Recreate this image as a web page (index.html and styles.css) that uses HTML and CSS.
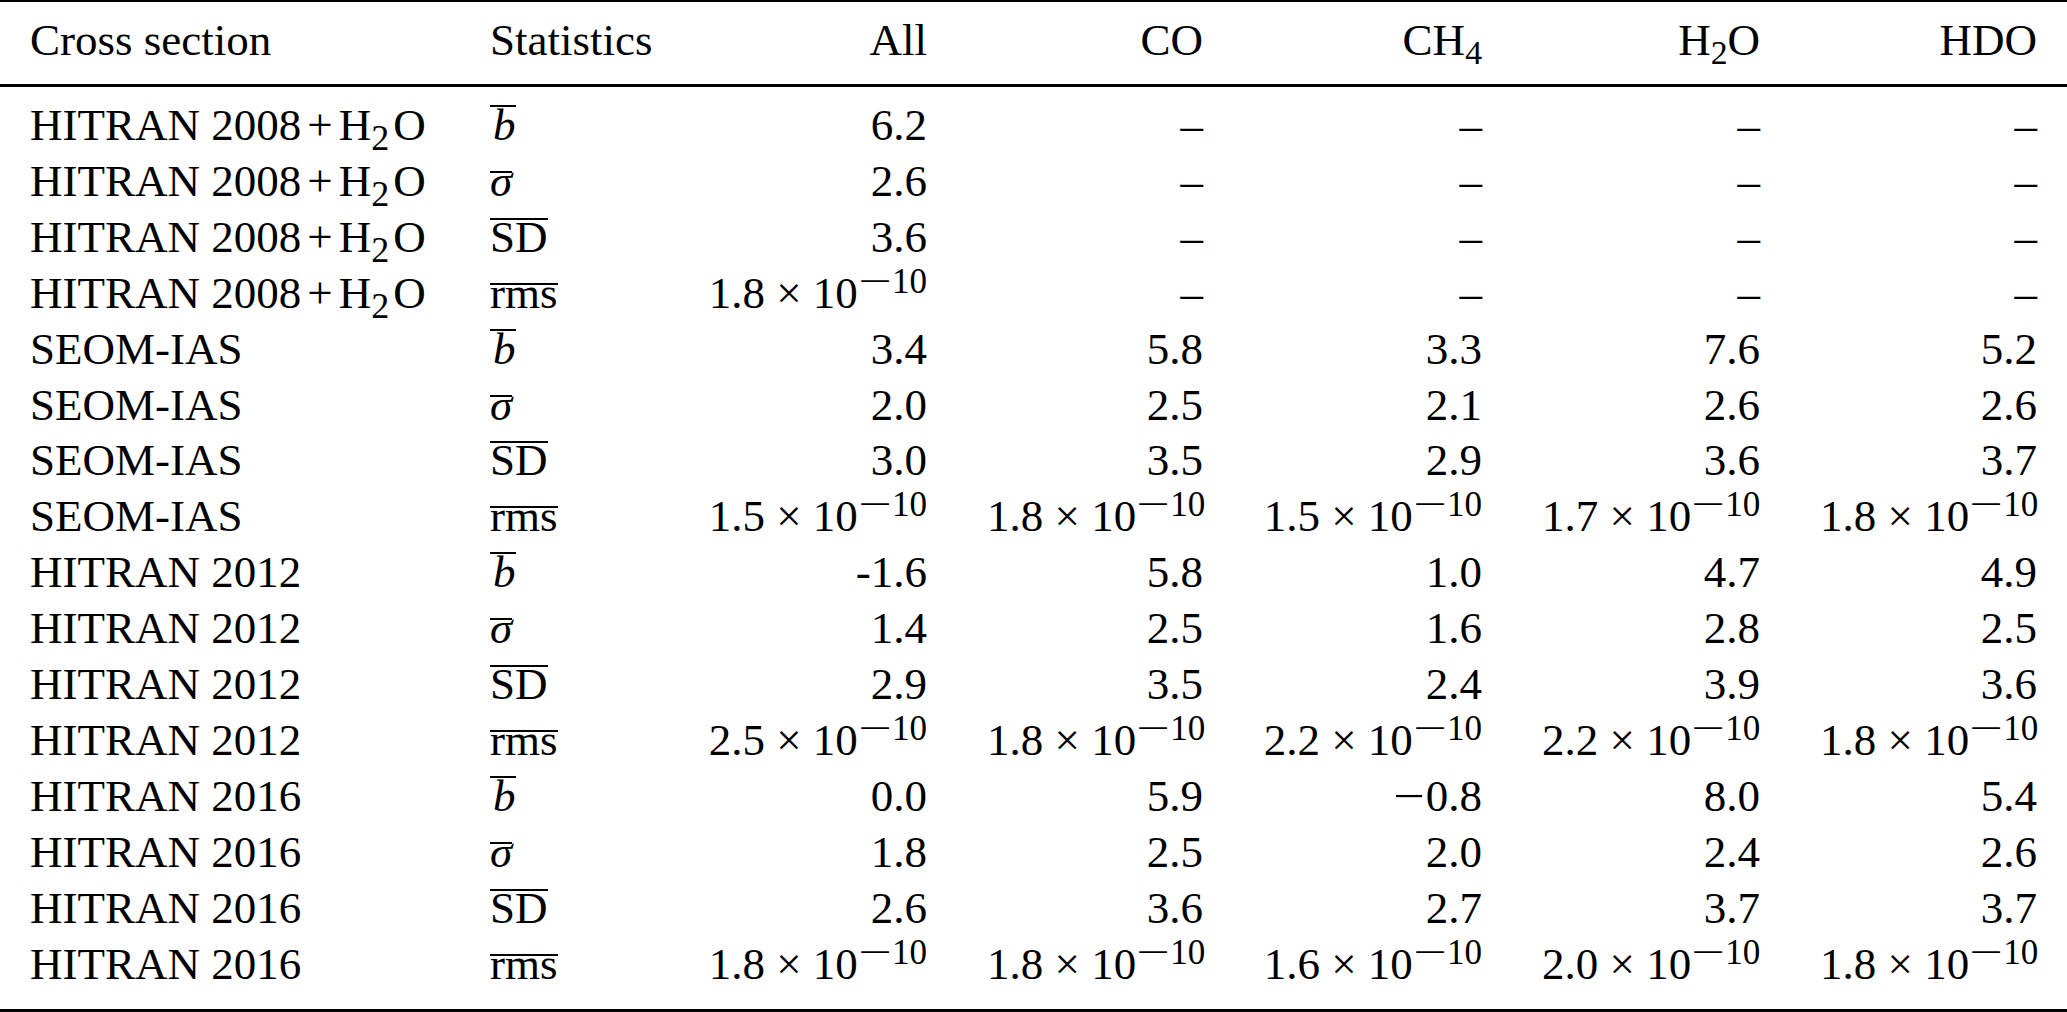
FILE: index.html
```html
<!DOCTYPE html>
<html lang="en">
<head>
<meta charset="utf-8">
<title>Cross section statistics</title>
<link rel="stylesheet" href="styles.css">
</head>
<body>
<table class="stats">
  <colgroup>
    <col class="c-name">
    <col class="c-stat">
    <col class="c-all">
    <col class="c-co">
    <col class="c-ch4">
    <col class="c-h2o">
    <col class="c-hdo">
  </colgroup>
  <thead>
    <tr>
      <th class="l">Cross section</th>
      <th class="l">Statistics</th>
      <th>All</th>
      <th>CO</th>
      <th>CH<span class="sub">4</span></th>
      <th>H<span class="sub">2</span>O</th>
      <th>HDO</th>
    </tr>
  </thead>
  <tbody>
    <tr><td class="l">HITRAN 2008<span class="op">+</span>H<span class="sub sub-m">2</span>O</td><td class="l"><span class="bar bar-asc"><i>b</i></span></td><td>6.2</td><td>–</td><td>–</td><td>–</td><td>–</td></tr>
    <tr><td class="l">HITRAN 2008<span class="op">+</span>H<span class="sub sub-m">2</span>O</td><td class="l"><span class="bar bar-x"><i>σ</i></span></td><td>2.6</td><td>–</td><td>–</td><td>–</td><td>–</td></tr>
    <tr><td class="l">HITRAN 2008<span class="op">+</span>H<span class="sub sub-m">2</span>O</td><td class="l"><span class="bar bar-cap">SD</span></td><td>3.6</td><td>–</td><td>–</td><td>–</td><td>–</td></tr>
    <tr><td class="l">HITRAN 2008<span class="op">+</span>H<span class="sub sub-m">2</span>O</td><td class="l"><span class="bar bar-x">rms</span></td><td>1.8 × 10<span class="sup"><span class="mn">−</span>10</span></td><td>–</td><td>–</td><td>–</td><td>–</td></tr>

    <tr><td class="l">SEOM-IAS</td><td class="l"><span class="bar bar-asc"><i>b</i></span></td><td>3.4</td><td>5.8</td><td>3.3</td><td>7.6</td><td>5.2</td></tr>
    <tr><td class="l">SEOM-IAS</td><td class="l"><span class="bar bar-x"><i>σ</i></span></td><td>2.0</td><td>2.5</td><td>2.1</td><td>2.6</td><td>2.6</td></tr>
    <tr><td class="l">SEOM-IAS</td><td class="l"><span class="bar bar-cap">SD</span></td><td>3.0</td><td>3.5</td><td>2.9</td><td>3.6</td><td>3.7</td></tr>
    <tr><td class="l">SEOM-IAS</td><td class="l"><span class="bar bar-x">rms</span></td><td>1.5 × 10<span class="sup"><span class="mn">−</span>10</span></td><td>1.8 × 10<span class="sup"><span class="mn">−</span>10</span></td><td>1.5 × 10<span class="sup"><span class="mn">−</span>10</span></td><td>1.7 × 10<span class="sup"><span class="mn">−</span>10</span></td><td>1.8 × 10<span class="sup"><span class="mn">−</span>10</span></td></tr>

    <tr><td class="l">HITRAN 2012</td><td class="l"><span class="bar bar-asc"><i>b</i></span></td><td>-1.6</td><td>5.8</td><td>1.0</td><td>4.7</td><td>4.9</td></tr>
    <tr><td class="l">HITRAN 2012</td><td class="l"><span class="bar bar-x"><i>σ</i></span></td><td>1.4</td><td>2.5</td><td>1.6</td><td>2.8</td><td>2.5</td></tr>
    <tr><td class="l">HITRAN 2012</td><td class="l"><span class="bar bar-cap">SD</span></td><td>2.9</td><td>3.5</td><td>2.4</td><td>3.9</td><td>3.6</td></tr>
    <tr><td class="l">HITRAN 2012</td><td class="l"><span class="bar bar-x">rms</span></td><td>2.5 × 10<span class="sup"><span class="mn">−</span>10</span></td><td>1.8 × 10<span class="sup"><span class="mn">−</span>10</span></td><td>2.2 × 10<span class="sup"><span class="mn">−</span>10</span></td><td>2.2 × 10<span class="sup"><span class="mn">−</span>10</span></td><td>1.8 × 10<span class="sup"><span class="mn">−</span>10</span></td></tr>

    <tr><td class="l">HITRAN 2016</td><td class="l"><span class="bar bar-asc"><i>b</i></span></td><td>0.0</td><td>5.9</td><td><span class="mn">−</span>0.8</td><td>8.0</td><td>5.4</td></tr>
    <tr><td class="l">HITRAN 2016</td><td class="l"><span class="bar bar-x"><i>σ</i></span></td><td>1.8</td><td>2.5</td><td>2.0</td><td>2.4</td><td>2.6</td></tr>
    <tr><td class="l">HITRAN 2016</td><td class="l"><span class="bar bar-cap">SD</span></td><td>2.6</td><td>3.6</td><td>2.7</td><td>3.7</td><td>3.7</td></tr>
    <tr><td class="l">HITRAN 2016</td><td class="l"><span class="bar bar-x">rms</span></td><td>1.8 × 10<span class="sup"><span class="mn">−</span>10</span></td><td>1.8 × 10<span class="sup"><span class="mn">−</span>10</span></td><td>1.6 × 10<span class="sup"><span class="mn">−</span>10</span></td><td>2.0 × 10<span class="sup"><span class="mn">−</span>10</span></td><td>1.8 × 10<span class="sup"><span class="mn">−</span>10</span></td></tr>
  </tbody>
</table>
</body>
</html>
```

FILE: styles.css
```css
html, body {
  margin: 0;
  padding: 0;
  background: #ffffff;
}

body {
  font-family: "Liberation Serif", "Times New Roman", serif;
  font-size: 45px;
  color: #000000;
}

.stats {
  width: 2067px;
  table-layout: fixed;
  border-collapse: separate;
  border-spacing: 0;
}

.c-name { width: 460px; }
.c-stat { width: 218px; }
.c-all  { width: 279px; }
.c-co   { width: 276px; }
.c-ch4  { width: 279px; }
.c-h2o  { width: 278px; }
.c-hdo  { width: 277px; }

.stats th,
.stats td {
  padding: 0 30px;
  text-align: right;
  white-space: nowrap;
  font-weight: normal;
  vertical-align: baseline;
}

.stats .l {
  text-align: left;
}

.stats th {
  border-top: 2px solid #000;
  border-bottom: 3px solid #000;
  padding-top: 10px;
  padding-bottom: 16px;
  line-height: 56px;
}

.stats td {
  line-height: 55.9px;
}

.stats tbody tr:first-child td {
  padding-top: 11px;
}

.stats tbody tr:last-child td {
  padding-bottom: 16px;
  border-bottom: 3px solid #000;
}

/* subscripts (chemical formulas) */
.sub {
  font-size: 0.75em;
  vertical-align: -9px;
  line-height: 0;
}

.sub-m {
  font-size: 0.8em;
  vertical-align: -10px;
  margin-right: 4px;
}

/* binary operator in the row labels */
.op {
  margin: 0 6px;
}

/* superscript exponents */
.sup {
  font-size: 0.78em;
  vertical-align: 15px;
  line-height: 0;
}

/* long math minus */
.mn {
  display: inline-block;
  width: 0.72em;
  text-align: center;
  transform: scaleX(1.25);
}

.sup .mn {
  width: 0.97em;
  transform: scaleX(1.7);
}

/* overlined statistics symbols */
.bar {
  display: inline-block;
  border-top: 2px solid #000;
}

.bar i {
  font-style: italic;
}

.bar-cap { line-height: 35.6px; }
.bar-asc { line-height: 37.6px; padding-left: 3px; }
.bar-x   { line-height: 17.6px; }
```
